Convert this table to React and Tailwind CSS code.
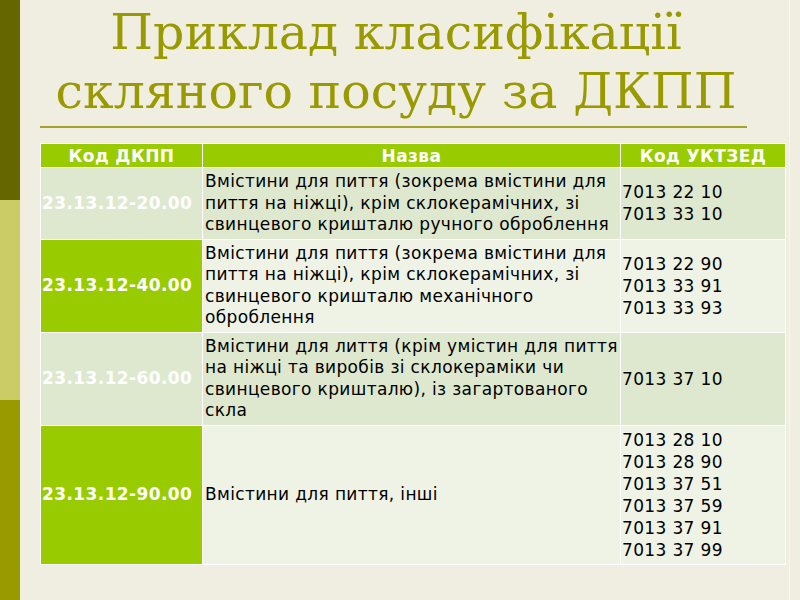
const ROWS = [
    {
        code: '23.13.12-20.00',
        name: [
            'Вмістини для пиття (зокрема вмістини для',
            'пиття на ніжці), крім склокерамічних, зі',
            'свинцевого кришталю ручного оброблення',
        ],
        codes: ['7013 22 10', '7013 33 10'],
        strong: false,
    },
    {
        code: '23.13.12-40.00',
        name: [
            'Вмістини для пиття (зокрема вмістини для',
            'пиття на ніжці), крім склокерамічних, зі',
            'свинцевого кришталю механічного',
            'оброблення',
        ],
        codes: ['7013 22 90', '7013 33 91', '7013 33 93'],
        strong: true,
    },
    {
        code: '23.13.12-60.00',
        name: [
            'Вмістини для лиття (крім умістин для пиття',
            'на ніжці та виробів зі склокераміки чи',
            'свинцевого кришталю), із загартованого',
            'скла',
        ],
        codes: ['7013 37 10'],
        strong: false,
    },
    {
        code: '23.13.12-90.00',
        name: ['Вмістини для пиття, інші'],
        codes: ['7013 28 10', '7013 28 90', '7013 37 51', '7013 37 59', '7013 37 91', '7013 37 99'],
        strong: true,
    },
];

const App = () => {
    return (
        <div className="w-[800px] h-[600px] flex bg-[#f0eee1] overflow-hidden">
            {/* Left stripe */}
            <div className="w-[20px] flex flex-col shrink-0">
                <div className="h-[200px] bg-[#666600]" />
                <div className="h-[200px] bg-[#cccc66]" />
                <div className="h-[200px] bg-[#999900]" />
            </div>

            <div className="flex-1 pl-[20px]">
                {/* Title */}
                <h1
                    className="w-[712px] pt-[3px] text-center text-[49px] leading-[59px] text-[#999900] font-normal whitespace-nowrap"
                    style={{ fontFamily: '"DejaVu Serif", serif' }}
                >
                    Приклад класифікації
                    <br />
                    скляного посуду за ДКПП
                </h1>
                <div className="mt-[5px] h-[2px] w-[707px] bg-[#a3a328]" />

                {/* Table */}
                <table
                    className="mt-[15px] w-[745px] table-fixed border-collapse text-[17px] text-black"
                    style={{ fontFamily: '"DejaVu Sans", sans-serif' }}
                >
                    <colgroup>
                        <col className="w-[162px]" />
                        <col className="w-[418px]" />
                        <col className="w-[165px]" />
                    </colgroup>
                    <thead>
                        <tr className="bg-[#99cc00] text-white font-bold text-[17px] tracking-[0.4px]">
                            <th className="border border-white p-0 h-[24px] leading-[22px]">Код ДКПП</th>
                            <th className="border border-white p-0 h-[24px] leading-[22px]">Назва</th>
                            <th className="border border-white p-0 h-[24px] leading-[22px]">Код УКТЗЕД</th>
                        </tr>
                    </thead>
                    <tbody>
                        {ROWS.map((row) => (
                            <tr key={row.code} className={row.strong ? 'bg-[#eef3e6]' : 'bg-[#dee8ce]'}>
                                <td
                                    className={`border border-white pl-[1px] pr-0 py-[3px] align-middle font-bold text-white tracking-[0.4px] whitespace-nowrap ${row.strong ? 'bg-[#99cc00]' : ''}`}
                                >
                                    {row.code}
                                </td>
                                <td className="border border-white pl-[2px] pr-0 py-[3px] align-middle leading-[21.5px] tracking-[0.35px] whitespace-nowrap overflow-hidden">
                                    {row.name.map((line) => (
                                        <div key={line}>{line}</div>
                                    ))}
                                </td>
                                <td className="border border-white pl-[1px] py-[3px] align-middle leading-[22px] tracking-[0.35px]">
                                    {row.codes.map((c) => (
                                        <div key={c}>{c}</div>
                                    ))}
                                </td>
                            </tr>
                        ))}
                    </tbody>
                </table>
            </div>
            <div className="w-[1px] bg-[#f8f6ee] mr-[10px]" />
        </div>
    );
};

export default App;
